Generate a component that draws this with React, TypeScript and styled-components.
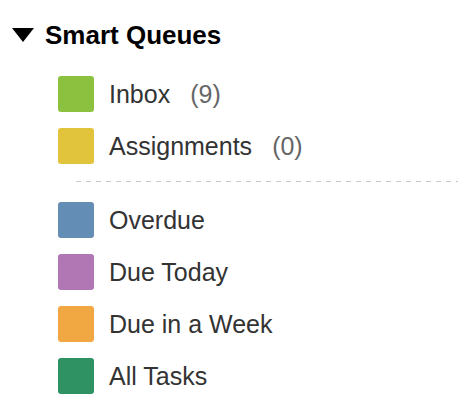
import React from 'react';
import styled, { createGlobalStyle } from 'styled-components';

const GlobalStyle = createGlobalStyle`
  body {
    margin: 0;
    background: #fff;
    font-family: 'Liberation Sans', Arial, Helvetica, sans-serif;
  }
`;

const smartQueues = [
  { name: 'Inbox', color: '#8cc03f', count: 9 },
  { name: 'Assignments', color: '#e2c43c', count: 0 },
];

const dateQueues = [
  { name: 'Overdue', color: '#648db5' },
  { name: 'Due Today', color: '#b177b5' },
  { name: 'Due in a Week', color: '#f2a842' },
  { name: 'All Tasks', color: '#2f9263' },
];

export default function App() {
  return (
    <>
      <GlobalStyle />
      <Panel>
        <Header>
          <Caret />
          <Title>Smart Queues</Title>
        </Header>

        <QueueList>
          {smartQueues.map((q) => (
            <QueueItem key={q.name}>
              <Swatch color={q.color} />
              <Label>{q.name}</Label>
              <Count>({q.count})</Count>
            </QueueItem>
          ))}
        </QueueList>

        <Divider />

        <QueueList>
          {dateQueues.map((q) => (
            <QueueItem key={q.name}>
              <Swatch color={q.color} />
              <Label>{q.name}</Label>
            </QueueItem>
          ))}
        </QueueList>
      </Panel>
    </>
  );
}

const Panel = styled.div`
  display: flex;
  flex-direction: column;
  width: 472px;
  padding-top: 20px;
`;

const Header = styled.div`
  display: flex;
  align-items: center;
  height: 30px;
  padding-left: 12px;
  margin-bottom: 18px;
`;

const Caret = styled.span`
  width: 0;
  height: 0;
  margin-right: 11px;
  border-left: 11.5px solid transparent;
  border-right: 11.5px solid transparent;
  border-top: 14px solid #000;
`;

const Title = styled.div`
  font-size: 26px;
  font-weight: bold;
  color: #000;
`;

const QueueList = styled.div`
  display: flex;
  flex-direction: column;
  padding-left: 58px;
`;

const QueueItem = styled.div`
  display: flex;
  align-items: center;
  height: 52px;
`;

const Swatch = styled.span<{ color: string }>`
  flex-shrink: 0;
  width: 36px;
  height: 36px;
  margin-right: 15px;
  border-radius: 3px;
  background-color: ${(p) => p.color};
`;

const Label = styled.span`
  font-size: 25px;
  color: #333;
`;

const Count = styled.span`
  margin-left: 20px;
  font-size: 25px;
  color: #666;
`;

const Divider = styled.div`
  height: 1px;
  margin: 9px 14px 12px 76px;
  background: repeating-linear-gradient(to right, #c8c8c8 0 5px, transparent 5px 10px);
`;
